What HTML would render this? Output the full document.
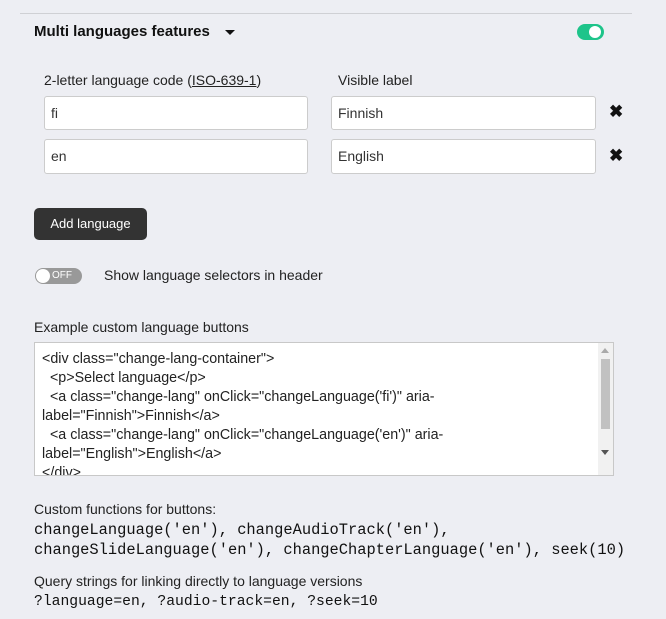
<!DOCTYPE html>
<html><head><style>
body{margin:0;width:666px;height:619px;background:#edeef3;font-family:"Liberation Sans",sans-serif;color:#222;position:relative;overflow:hidden}
.a{position:absolute}
.hr{left:20px;top:13px;width:612px;height:1px;background:#cfd0d4}
.t{font-size:14px;color:#222}
.inp{position:absolute;box-sizing:border-box;background:#fff;border:1px solid #ccc;border-radius:3px;font-size:14px;padding:0 6px;line-height:32px;color:#333}
.x{font-size:17px;font-weight:bold;color:#111}
.mono{font-family:"Liberation Mono",monospace;font-size:15.4px;color:#111}
</style></head><body>
<div class="a hr"></div>
<div class="a" style="left:34px;top:23px;font-size:15px;font-weight:bold;color:#111">Multi languages features</div>
<div class="a" style="left:225px;top:30px;width:0;height:0;border-left:5px solid transparent;border-right:5px solid transparent;border-top:5px solid #111"></div>
<div class="a" style="left:577px;top:24px;width:27px;height:16px;border-radius:8px;background:#1ec48a"></div>
<div class="a" style="left:589px;top:26px;width:12px;height:12px;border-radius:6px;background:#fff"></div>
<div class="a t" style="left:44px;top:72px">2-letter language code (<u>ISO-639-1</u>)</div>
<div class="a t" style="left:338px;top:72px">Visible label</div>
<div class="inp" style="left:44px;top:96px;width:264px;height:34px">fi</div>
<div class="inp" style="left:331px;top:96px;width:265px;height:34px">Finnish</div>
<div class="a x" style="left:609px;top:102px">✖</div>
<div class="inp" style="left:44px;top:139px;width:264px;height:35px">en</div>
<div class="inp" style="left:331px;top:139px;width:265px;height:35px">English</div>
<div class="a x" style="left:609px;top:146px">✖</div>
<div class="a" style="left:34px;top:208px;width:113px;height:32px;border-radius:5px;background:#333;color:#fff;font-size:13px;line-height:32px;text-align:center">Add language</div>
<div class="a" style="left:35px;top:268px;width:47px;height:16px;border-radius:8px;background:#999"></div>
<div class="a" style="left:36px;top:269px;width:14px;height:14px;border-radius:7px;background:#fff"></div>
<div class="a" style="left:52px;top:269px;font-size:10px;color:#fff;line-height:14px">OFF</div>
<div class="a t" style="left:104px;top:267px">Show language selectors in header</div>
<div class="a t" style="left:34px;top:319px">Example custom language buttons</div>
<div class="a" style="left:34px;top:342px;width:580px;height:134px;box-sizing:border-box;background:#fff;border:1px solid #c8c8c8;overflow:hidden">
<div style="position:absolute;left:7px;top:7px;font-size:14.3px;line-height:19px;color:#222;white-space:pre;width:540px">&lt;div class="change-lang-container"&gt;
  &lt;p&gt;Select language&lt;/p&gt;
  &lt;a class="change-lang" onClick="changeLanguage('fi')" aria-
label="Finnish"&gt;Finnish&lt;/a&gt;
  &lt;a class="change-lang" onClick="changeLanguage('en')" aria-
label="English"&gt;English&lt;/a&gt;
&lt;/div&gt;</div>
<div style="position:absolute;right:0;top:0;width:15px;height:132px;background:#f1f1f1"></div>
<div style="position:absolute;right:3px;top:16px;width:9px;height:70px;background:#c1c1c1"></div>
<div style="position:absolute;right:4px;top:5px;border-left:4px solid transparent;border-right:4px solid transparent;border-bottom:5px solid #aaa;width:0;height:0"></div>
<div style="position:absolute;right:4px;top:107px;border-left:4px solid transparent;border-right:4px solid transparent;border-top:5px solid #555;width:0;height:0"></div>
</div>
<div class="a t" style="left:34px;top:501px">Custom functions for buttons:</div>
<div class="a mono" style="left:34px;top:521px">changeLanguage('en'), changeAudioTrack('en'),</div>
<div class="a mono" style="left:34px;top:541px">changeSlideLanguage('en'), changeChapterLanguage('en'), seek(10)</div>
<div class="a t" style="left:34px;top:573px">Query strings for linking directly to language versions</div>
<div class="a mono" style="left:34px;top:594px;font-size:14.7px">?language=en, ?audio-track=en, ?seek=10</div>
</body></html>
